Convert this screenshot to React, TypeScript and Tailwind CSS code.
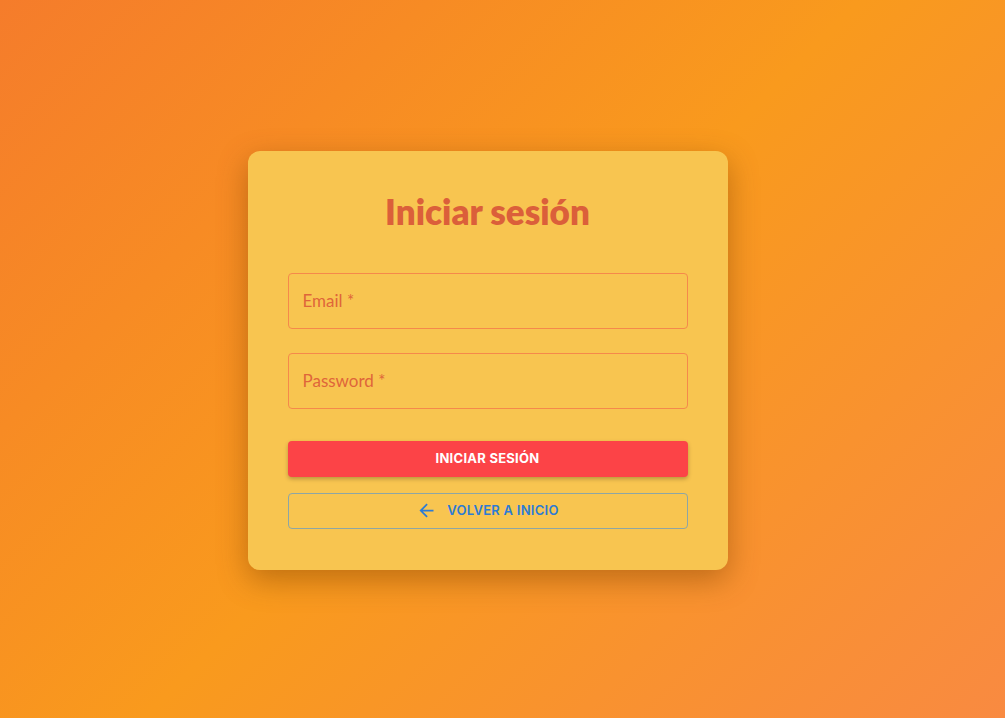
function ArrowBack() {
  return (
    <svg width="21" height="21" viewBox="0 0 24 24" fill="currentColor" aria-hidden="true">
      <path d="M20 11H7.83l5.59-5.59L12 4l-8 8 8 8 1.41-1.41L7.83 13H20v-2z" />
    </svg>
  );
}

export default function App() {
  return (
    <div className="flex h-[718px] w-full items-center justify-center bg-[linear-gradient(135deg,#f57c2b_0%,#f99a1d_50%,#f98a41_100%)] pr-[30px] pt-[2px] font-['Lato',sans-serif]">
      <div className="w-[480px] rounded-xl bg-[#f8c550] px-10 pb-[41px] pt-10 shadow-[0_10px_30px_rgba(120,60,0,0.45)]">
        <h1 className="text-center text-[35px] font-extrabold leading-10 text-[#db5f3a]">Iniciar sesión</h1>
        <form className="mt-[42px] flex flex-col">
          <label className="flex h-14 items-center rounded border border-[#f5894b] px-[14px] text-[17px] text-[#df653a]">
            <span>Email *</span>
          </label>
          <label className="mt-6 flex h-14 items-center rounded border border-[#f5894b] px-[14px] text-[17px] text-[#df653a]">
            <span>Password *</span>
          </label>
          <button
            type="button"
            className="mt-8 h-9 rounded bg-[#fc4347] font-['Inter',sans-serif] text-[13px] font-bold tracking-[0.02em] text-white shadow-[0_2px_4px_rgba(0,0,0,0.25)]"
          >
            INICIAR SESIÓN
          </button>
          <button
            type="button"
            className="mt-4 flex h-9 items-center justify-center gap-[10px] rounded border border-[#8ea6a4] font-['Inter',sans-serif] text-[13px] font-semibold tracking-[0.02em] text-[#2c7bd5]"
          >
            <ArrowBack />
            VOLVER A INICIO
          </button>
        </form>
      </div>
    </div>
  );
}
